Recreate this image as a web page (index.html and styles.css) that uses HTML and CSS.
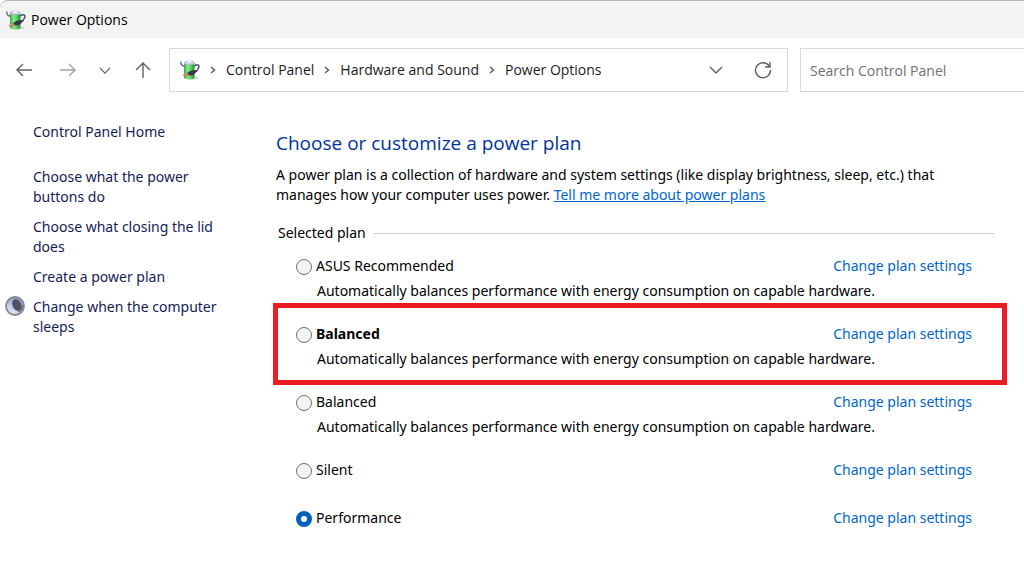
FILE: index.html
```
<!DOCTYPE html>
<html lang="en">
	<head>
		<meta charset="utf-8">
		<title>Power Options</title>
		<link rel="stylesheet" href="styles.css">
	</head>
	<body>
		<svg class="defs" width="0" height="0" aria-hidden="true">
			<defs>
				<linearGradient id="green" x1="0" x2="1" y1="0" y2="0">
					<stop offset="0" stop-color="#3aa548"/>
					<stop offset=".35" stop-color="#86ec8c"/>
					<stop offset=".7" stop-color="#48c854"/>
					<stop offset="1" stop-color="#2c8a3a"/>
				</linearGradient>
				<linearGradient id="ball" x1=".8" y1="0" x2=".2" y2="1">
					<stop offset="0" stop-color="#7f8fc0"/>
					<stop offset=".5" stop-color="#b4c0e4"/>
					<stop offset="1" stop-color="#eef1fc"/>
				</linearGradient>
			</defs>
			<symbol id="battery" viewBox="0 0 20 20">
				<ellipse cx="12" cy="18" rx="6.500" ry="1.600" fill="#d4d4d4"/>
				<path d="M14 6.500c1-2 4.800-2.600 5-.2.200 2.200-2.200 3.200-2.600 5.700" fill="none" stroke="#4a4870" stroke-width="1.400"/>
				<path d="M.8 1.500c-.2 3 1 4.500 4 5" fill="none" stroke="#5c5c82" stroke-width="1.300"/>
				<path d="M4 3v14.500c0 2.500 10.500 2.500 10.500 0V3z" fill="url(#green)"/>
				<ellipse cx="9.200" cy="3" rx="5.300" ry="1.900" fill="#c9d6de" stroke="#8fa5ad" stroke-width=".6"/>
				<ellipse cx="9.200" cy="1.900" rx="2.400" ry="1.300" fill="#e6edf5"/>
				<path d="M7 13.500c2-2.500 6-3.800 9.500-3.300-.5 3.500-3.500 5.800-7 5.300z" fill="#3a3a46"/>
				<path d="M2.500 15l4.500-2.300 2.500 2.800-4 2z" fill="#8d7043"/>
				<path d="M3 15.200l4-1.500M5 16.700l3.500-1.500" stroke="#ecd29a" stroke-width=".8"/>
			</symbol>
			<symbol id="crumb" viewBox="0 0 6 8">
				<path d="M1 1l3.500 3L1 7" fill="none" stroke="#555" stroke-width="1.400"/>
			</symbol>
			<symbol id="down" viewBox="0 0 14 8">
				<path d="M1 1l6 6 6-6" fill="none" stroke="currentColor" stroke-width="1.400"/>
			</symbol>
		</svg>

		<header class="titlebar">
			<svg class="app-icon" width="20" height="20"><use href="#battery"/></svg>
			<span>Power Options</span>
		</header>

		<nav class="toolbar">
			<div class="nav-buttons">
				<button class="icon-btn" aria-label="Back">
					<svg width="16" height="14" viewBox="0 0 16 14"><path d="M16 7H1M7 1L1 7l6 6"/></svg>
				</button>
				<button class="icon-btn off" aria-label="Forward" disabled>
					<svg width="16" height="14" viewBox="0 0 16 14"><path d="M0 7h15M9 1l6 6-6 6"/></svg>
				</button>
				<button class="icon-btn small" aria-label="Recent locations">
					<svg width="12" height="7"><use href="#down"/></svg>
				</button>
				<button class="icon-btn" aria-label="Up">
					<svg width="16" height="16" viewBox="0 0 16 16"><path d="M8 16V1M1 8l7-7 7 7"/></svg>
				</button>
			</div>
			<div class="address">
				<svg class="app-icon" width="20" height="20"><use href="#battery"/></svg>
				<svg class="sep" width="6" height="8"><use href="#crumb"/></svg>
				<a href="#">Control Panel</a>
				<svg class="sep" width="6" height="8"><use href="#crumb"/></svg>
				<a href="#">Hardware and Sound</a>
				<svg class="sep" width="6" height="8"><use href="#crumb"/></svg>
				<a href="#">Power Options</a>
				<div class="address-tools">
					<button class="icon-btn" aria-label="Previous locations">
						<svg width="14" height="8"><use href="#down"/></svg>
					</button>
					<button class="icon-btn" aria-label="Refresh">
						<svg width="18" height="18" viewBox="0 0 18 18"><path d="M15.500 5.500A7.500 7.500 0 1 0 16.500 9M16 1v5h-5"/></svg>
					</button>
				</div>
			</div>
			<input class="search" type="search" placeholder="Search Control Panel" aria-label="Search Control Panel">
		</nav>

		<div class="content">
			<aside class="sidebar">
				<a class="home" href="#">Control Panel Home</a>
				<a href="#">Choose what the power buttons do</a>
				<a href="#">Choose what closing the lid does</a>
				<a href="#">Create a power plan</a>
				<a class="with-icon" href="#">
					<svg class="moon" width="20" height="20" viewBox="0 0 20 20">
						<circle cx="10" cy="10" r="9" fill="url(#ball)" stroke="#85878c" stroke-width="1.800"/>
						<ellipse cx="11.800" cy="9" rx="4.300" ry="6.200" transform="rotate(-25 11.800 9)" fill="#50535c"/>
						<path d="M13.500 16c2.500-1.500 4-4 3.800-7" fill="none" stroke="#5d606a" stroke-width="1.200"/>
					</svg>
					Change when the computer sleeps
				</a>
			</aside>

			<main class="main">
				<h1>Choose or customize a power plan</h1>
				<p class="intro">A power plan is a collection of hardware and system settings (like display brightness, sleep, etc.) that manages how your computer uses power. <a href="#">Tell me more about power plans</a></p>

				<form class="plans">
					<h2>Selected plan</h2>
					<div class="plan">
						<div class="plan-head">
							<input type="radio" name="plan" id="asus">
							<label for="asus">ASUS Recommended</label>
							<a href="#">Change plan settings</a>
						</div>
						<p>Automatically balances performance with energy consumption on capable hardware.</p>
					</div>
					<div class="plan highlight">
						<div class="plan-head">
							<input type="radio" name="plan" id="balanced1">
							<label for="balanced1">Balanced</label>
							<a href="#">Change plan settings</a>
						</div>
						<p>Automatically balances performance with energy consumption on capable hardware.</p>
					</div>
					<div class="plan">
						<div class="plan-head">
							<input type="radio" name="plan" id="balanced2">
							<label for="balanced2">Balanced</label>
							<a href="#">Change plan settings</a>
						</div>
						<p>Automatically balances performance with energy consumption on capable hardware.</p>
					</div>
					<div class="plan">
						<div class="plan-head">
							<input type="radio" name="plan" id="silent">
							<label for="silent">Silent</label>
							<a href="#">Change plan settings</a>
						</div>
					</div>
					<div class="plan">
						<div class="plan-head">
							<input type="radio" name="plan" id="performance" checked>
							<label for="performance">Performance</label>
							<a href="#">Change plan settings</a>
						</div>
					</div>
				</form>
			</main>
		</div>
	</body>
</html>
```
FILE: styles.css
```
:root {
	--text: #000;
	--link: #0066cc;
	--task: #151c55;
	--heading: #003399;
	--line: #d9d9d9;
	--red: #ed1c24;
}
* {box-sizing: border-box;}
body {
	margin: 0;
	background: #fff;
	color: var(--text);
	font: 14px/20px "Segoe UI", "Open Sans", sans-serif;
	overflow-x: hidden;
}
a {color: var(--link); text-decoration: none;}
h1, h2, p {margin: 0; font-weight: normal;}
svg {display: block; flex: none;}
.defs {position: absolute;}

/* title bar */
.titlebar {
	display: flex;
	align-items: center;
	gap: 5px;
	height: 38px;
	padding-left: 6px;
	background: #f3f3f3;
	border-top: 1px solid #b5b5b5;
	border-top-left-radius: 8px;
}

/* toolbar */
.toolbar {
	display: flex;
	gap: 12px;
	padding-top: 10px;
}
.nav-buttons {
	display: flex;
	align-items: center;
	gap: 16px;
	width: 157px;
	padding-left: 10px;
}
.icon-btn {
	display: flex;
	align-items: center;
	justify-content: center;
	width: 28px;
	height: 28px;
	padding: 0;
	border: 0;
	background: none;
	color: #606060;
}
.icon-btn path {fill: none; stroke: currentColor; stroke-width: 1.4;}
.icon-btn.off {color: #a0a0a0;}
.icon-btn.small {width: 16px;}
.address {
	display: flex;
	flex: 1;
	align-items: center;
	gap: 10px;
	height: 44px;
	padding: 0 10px;
	border: 1px solid var(--line);
}
.address a {color: #1b1b1b;}
.address-tools {
	display: flex;
	gap: 19px;
	margin-left: auto;
}
.search {
	width: 236px;
	height: 44px;
	margin-right: -12px;
	padding: 0 9px;
	border: 1px solid var(--line);
	border-radius: 0;
	font: inherit;
}
.search::placeholder {color: #707070;}

/* page */
.content {
	display: flex;
	padding: 30px 30px 0 33px;
	font-family: "Segoe UI", "Noto Sans", sans-serif;
}
.sidebar {
	display: flex;
	flex-direction: column;
	flex: none;
	gap: 10px;
	width: 193px;
	margin-right: 50px;
}
.sidebar a {color: var(--task);}
.sidebar .home {margin-bottom: 15px;}
.with-icon {position: relative;}
.moon {position: absolute; top: -1px; left: -28px;}
.main {flex: 1; padding-top: 8px;}
h1 {
	margin-bottom: 9px;
	color: var(--heading);
	font-family: "Segoe UI", "Open Sans", sans-serif;
	font-size: 19px;
	line-height: 26px;
}
.intro {max-width: 680px;}
.intro a {text-decoration: underline;}

/* plans */
h2 {
	display: flex;
	align-items: center;
	gap: 8px;
	margin: 18px 0 13px;
	padding-left: 2px;
	font-size: 14px;
}
h2::after {
	content: "";
	flex: 1;
	border-top: 1px solid #ccc;
}
.plan {
	position: relative;
	margin-bottom: 23px;
	padding: 0 22px 0 20px;
}
.plan-head {
	display: flex;
	align-items: center;
	gap: 4px;
	padding-bottom: 5px;
}
.plan-head a {margin-left: auto;}
.plan p {padding-left: 21px;}
.plan input {
	appearance: none;
	width: 16px;
	height: 16px;
	margin: 2px 0 0;
	border: 1px solid #707070;
	border-radius: 50%;
	background: #f3f3f3;
}
.plan input:checked {
	border: 5px solid #005fb8;
	background: #fff;
}
.highlight label {font-weight: bold;}
.highlight::after {
	content: "";
	position: absolute;
	inset: -21px -13px -16px -3px;
	border: 5px solid var(--red);
	pointer-events: none;
}
```
